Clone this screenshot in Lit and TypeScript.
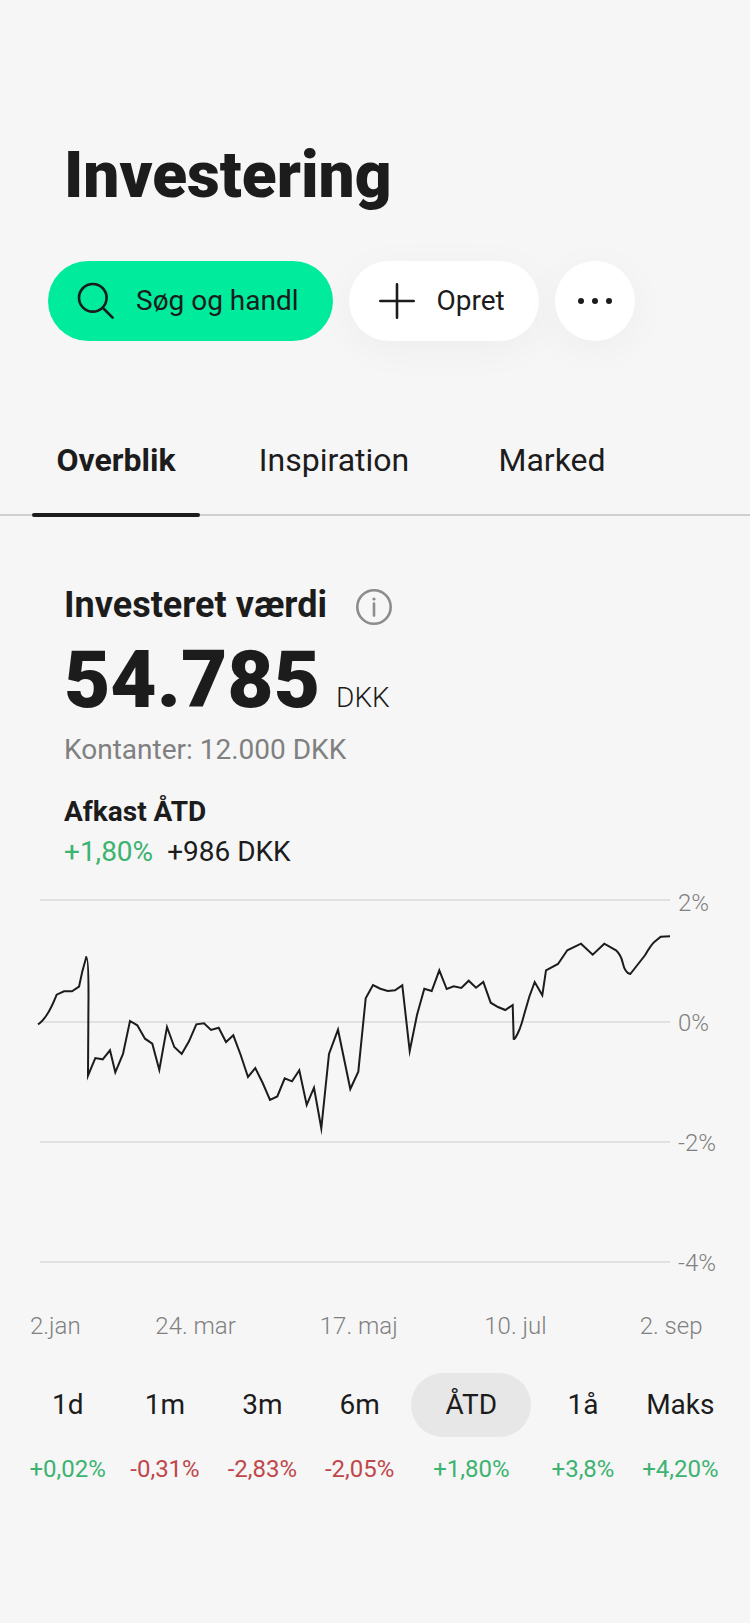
import { LitElement, html, css, svg } from "lit";
import { customElement, property, state } from "lit/decorators.js";
import { classMap } from "lit/directives/class-map.js";

const RANGES = [
  { label: "1d", change: "+0,02%" },
  { label: "1m", change: "-0,31%" },
  { label: "3m", change: "-2,83%" },
  { label: "6m", change: "-2,05%" },
  { label: "ÅTD", change: "+1,80%" },
  { label: "1å", change: "+3,8%" },
  { label: "Maks", change: "+4,20%" },
];

const TABS = ["Overblik", "Inspiration", "Marked"];

@customElement("return-chart")
class ReturnChart extends LitElement {
  static styles = css`
    :host {
      display: block;
      color: #808080;
      font-size: 24px;
      font-weight: 300;
      line-height: 32px;
    }
    .plot {
      display: grid;
      grid-template-columns: 1fr 72px;
      gap: 8px;
      height: 392px;
      padding-left: 38px;
    }
    .plot svg {
      display: block;
      width: 100%;
      height: 392px;
      overflow: visible;
    }
    .grid-line {
      stroke: #e1e1e1;
      stroke-width: 2;
    }
    .series {
      fill: none;
      stroke: #1c1c1c;
      stroke-width: 2;
      stroke-miterlimit: 10;
      vector-effect: non-scaling-stroke;
    }
    .y-axis {
      display: flex;
      flex-direction: column;
      justify-content: space-between;
    }
    .x-axis {
      display: grid;
      grid-template-columns: 125fr 164fr 164fr 155fr 110fr;
      margin-top: 31px;
      padding-left: 30px;
      white-space: nowrap;
    }
  `;

  @property({ type: Array }) yLabels = ["2%", "0%", "-2%", "-4%"];
  @property({ type: Array }) xLabels = [
    "2.jan",
    "24. mar",
    "17. maj",
    "10. jul",
    "2. sep",
  ];

  render() {
    return html`
      <div class="plot">
        <svg viewBox="0 -3 632 392" preserveAspectRatio="none" aria-hidden="true">
          ${[10, 132, 252, 372].map(
            (y) =>
              svg`<line class="grid-line" x1="2" x2="632" y1=${y} y2=${y} />`
          )}
          <path
            class="series"
            d="M0 134.3 Q4 132 8.7 125 Q13 119 18.7 104.7 L26 101.3 H34 L41 96.7
              Q44 81 48.3 67 Q50.5 67 50.5 105 L50 185.7 L57.3 168 L64.7 169.3
              L72 160.3 L77.3 182.3 L85 164 L92 131 L99.3 135.3 L107 148.7
              L114.3 153.7 L121.3 180 L129 137 L136.3 157 L143.7 164 L151 151.3
              L158.3 134.3 L166 133.3 L173 140 L180.7 137.7 L188 152 L195.3 145.3
              L202.7 165 L210 187 L217.3 178 L224.7 193 L232 210 L239.3 206.5
              L246.7 188.3 L254 191.3 L261.3 180.3 L268.7 215 L276 197.7
              L283.3 238.3 L291 164 L300 139.7 L312.3 199 L320.3 181.7
              L327.7 108.3 L335 95 L342.3 98.7 L349.7 101 L357 100.3 L364.3 95.3
              L371.7 161 L379 125 L386.3 98.7 L393.7 101 L401.3 80.3 L408.7 99
              L415.7 96.3 L423.3 98 L430.7 90.7 L438 97.7 L445.3 92
              L452.7 112.7 L460 117 L467.3 120 L474.7 115 L475.7 149
              Q477 150 481.7 139 Q484 133 486 125 L491.3 106.7 L496.7 92
              L504.3 105.3 L508 80.3 L520 74 L529.3 60.3 L543 53.7 L554.7 64.7
              L566.3 53.7 L578 60.3 Q583 65 584.7 72.7 Q587 83 592.3 84
              L607 65.3 Q613 55 616 52.3 L622.7 46.7 Q627 46.3 632 46.3"
          />
        </svg>
        <div class="y-axis">
          ${this.yLabels.map((label) => html`<span>${label}</span>`)}
        </div>
      </div>
      <div class="x-axis">
        ${this.xLabels.map((label) => html`<span>${label}</span>`)}
      </div>
    `;
  }
}

@customElement("app-root")
class AppRoot extends LitElement {
  static styles = css`
    :host {
      --text-color: #1c1c1c;
      --muted-color: #808080;
      --up-color: #3cb371;
      --down-color: #c0474b;
      display: block;
      min-height: 100vh;
      box-sizing: border-box;
      padding: 136px 0 48px;
      background-color: #f6f6f6;
      color: var(--text-color);
      font-family: Roboto, "Liberation Sans", sans-serif;
      font-size: 28px;
      line-height: 40px;
    }

    * {
      box-sizing: border-box;
    }
    h1,
    h2,
    h3,
    p {
      margin: 0;
    }
    button {
      margin: 0;
      padding: 0;
      border: none;
      background: none;
      color: inherit;
      font: inherit;
      cursor: pointer;
    }
    svg {
      display: block;
      flex: none;
    }

    h1 {
      padding: 0 64px;
      font-size: 64px;
      font-weight: 900;
      line-height: 80px;
    }

    .actions {
      display: flex;
      gap: 16px;
      margin-top: 45px;
      padding: 0 48px;
    }
    .action {
      display: flex;
      align-items: center;
      gap: 16px;
      height: 80px;
      padding: 0 34px 0 24px;
      border-radius: 40px;
      background-color: #fff;
      box-shadow: 0 8px 40px rgba(0, 0, 0, 0.04);
    }
    .action.primary {
      background-color: #00eb9b;
      box-shadow: none;
    }
    .action.round {
      width: 80px;
      padding: 0 16px;
    }

    .tabs {
      display: flex;
      gap: 50px;
      margin-top: 99px;
      padding: 0 32px;
      border-bottom: 2px solid #cfcfcf;
    }
    .tab {
      position: relative;
      width: 168px;
      padding-bottom: 34px;
      font-size: 32px;
      line-height: 40px;
    }
    .tab.active {
      font-weight: 700;
    }
    .tab.active::after {
      content: "";
      position: absolute;
      left: 0;
      right: 0;
      bottom: -3px;
      height: 4px;
      border-radius: 2px;
      background-color: var(--text-color);
    }

    .summary {
      padding: 66px 64px 0;
    }
    .heading {
      display: flex;
      align-items: center;
      gap: 29px;
    }
    h2 {
      font-size: 36px;
      font-weight: 700;
      line-height: 46px;
    }
    .info {
      margin-top: 4px;
      color: #8c8c8c;
    }
    .amount {
      display: flex;
      align-items: baseline;
      gap: 16px;
      margin-top: 12px;
    }
    .value {
      font-size: 80px;
      font-weight: 900;
      line-height: 80px;
    }
    .currency {
      font-weight: 300;
    }
    .cash {
      margin-top: 10px;
      color: var(--muted-color);
    }
    h3 {
      margin-top: 22px;
      font-size: 28px;
      font-weight: 700;
    }
    .return {
      display: flex;
      gap: 14px;
    }
    .up {
      color: var(--up-color);
    }
    .down {
      color: var(--down-color);
    }

    return-chart {
      margin-top: 15px;
    }

    .ranges {
      display: grid;
      grid-template-columns: repeat(4, 1fr) 126px repeat(2, 1fr);
      margin-top: 31px;
      padding: 0 21px 0 19px;
    }
    .range {
      display: flex;
      flex-direction: column;
      align-items: center;
      gap: 16px;
    }
    .range-label {
      border-radius: 32px;
      line-height: 64px;
    }
    .range.active .range-label {
      width: 120px;
      background-color: #e7e7e7;
    }
    .range-change {
      font-size: 24px;
      line-height: 32px;
    }
  `;

  @state() private tab = "Overblik";
  @state() private range = "ÅTD";

  render() {
    return html`
      <header>
        <h1>Investering</h1>
        <div class="actions">
          <button class="action primary">
            <svg width="48" height="48" viewBox="0 0 48 48" fill="none" stroke="currentColor" stroke-width="2.6" stroke-linecap="round" aria-hidden="true">
              <circle cx="20.8" cy="20.8" r="13.8" />
              <path d="M31 31l9.6 9.6" />
            </svg>
            Søg og handl
          </button>
          <button class="action">
            <svg width="48" height="48" viewBox="0 0 48 48" fill="none" stroke="currentColor" stroke-width="2.6" stroke-linecap="round" aria-hidden="true">
              <path d="M24 7.3v33.4M7.3 24h33.4" />
            </svg>
            Opret
          </button>
          <button class="action round" aria-label="Mere">
            <svg width="48" height="48" viewBox="0 0 48 48" fill="currentColor" aria-hidden="true">
              <circle cx="10" cy="24" r="3" />
              <circle cx="24" cy="24" r="3" />
              <circle cx="38" cy="24" r="3" />
            </svg>
          </button>
        </div>
      </header>

      <nav class="tabs" role="tablist">
        ${TABS.map(
          (name) => html`
            <button
              class=${classMap({ tab: true, active: name === this.tab })}
              role="tab"
              aria-selected=${name === this.tab}
              @click=${() => (this.tab = name)}
            >
              ${name}
            </button>
          `
        )}
      </nav>

      <main>
        <section class="summary">
          <div class="heading">
            <h2>Investeret værdi</h2>
            <button class="info" aria-label="Info">
              <svg width="36" height="36" viewBox="0 0 36 36" fill="none" stroke="currentColor" stroke-linecap="round" aria-hidden="true">
                <circle cx="18" cy="18" r="16.7" stroke-width="2.6" />
                <path d="M18 14.6v12" stroke-width="2.6" />
                <circle cx="18" cy="10" r="1.6" fill="currentColor" stroke="none" />
              </svg>
            </button>
          </div>
          <div class="amount">
            <span class="value">54.785</span>
            <span class="currency">DKK</span>
          </div>
          <p class="cash">Kontanter: 12.000 DKK</p>
          <h3>Afkast ÅTD</h3>
          <p class="return"><span class="up">+1,80%</span><span>+986 DKK</span></p>
        </section>

        <return-chart></return-chart>

        <div class="ranges">
          ${RANGES.map(
            ({ label, change }) => html`
              <button
                class=${classMap({ range: true, active: label === this.range })}
                aria-pressed=${label === this.range}
                @click=${() => (this.range = label)}
              >
                <span class="range-label">${label}</span>
                <span class="range-change ${change.startsWith("-") ? "down" : "up"}">${change}</span>
              </button>
            `
          )}
        </div>
      </main>
    `;
  }
}

export { AppRoot, ReturnChart };
declare global {
  interface HTMLElementTagNameMap {
    "app-root": AppRoot;
    "return-chart": ReturnChart;
  }
}
